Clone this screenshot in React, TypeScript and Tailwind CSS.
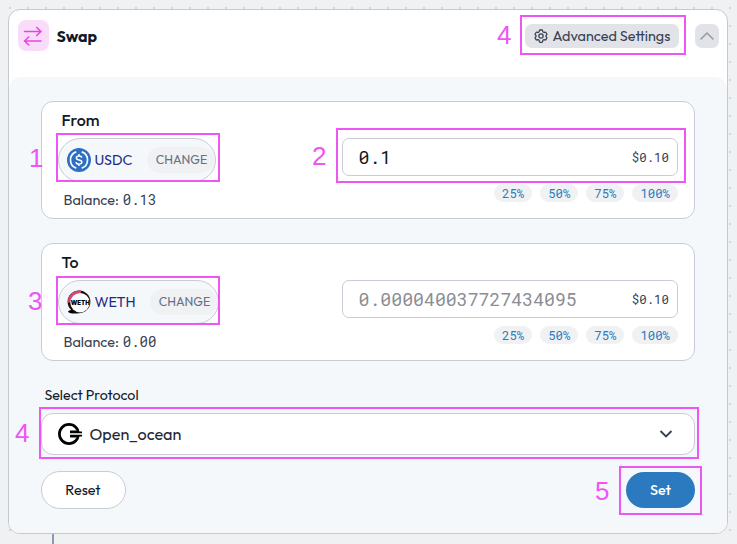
import React from "react";

const sans = "font-['Outfit','Lato',sans-serif]";
const mono = "font-['Roboto_Mono','Inter',monospace]";

function Amount({ value, className }: { value: string; className?: string }) {
  return <span className={`${mono} whitespace-nowrap ${className ?? ""}`}>{value}</span>;
}

function UsdcIcon() {
  return (
    <svg width="24" height="24" viewBox="0 0 32 32" className="shrink-0">
      <circle cx="16" cy="16" r="16" fill="#2e6fc4" />
      <path
        d="M12.4 5.2A11.4 11.4 0 0 0 12.4 26.8M19.6 5.2A11.4 11.4 0 0 1 19.6 26.8"
        fill="none"
        stroke="#fff"
        strokeWidth="2.2"
      />
      <path
        d="M19.6 12.9C19.4 11.3 18 10.6 16 10.6s-3.5 1-3.5 2.6c0 3.9 7.3 1.7 7.3 5.6 0 1.7-1.6 2.7-3.8 2.7s-3.7-.9-3.9-2.7M16 8v2.6M16 21.4V24"
        fill="none"
        stroke="#fff"
        strokeWidth="2"
      />
    </svg>
  );
}

function WethIcon() {
  return (
    <svg width="24" height="24" viewBox="0 0 24 24" className="shrink-0">
      <ellipse cx="7.5" cy="21.6" rx="6.5" ry="2" fill="#050505" />
      <circle cx="12" cy="11.8" r="11.4" fill="#111" />
      <path d="M2.4 12.5A9.8 9.8 0 0 1 14 2" fill="none" stroke="#d84673" strokeWidth="2.8" />
      <circle cx="13" cy="12.7" r="9.7" fill="#fff" />
      <text x="3.8" y="15" fontSize="6" fontWeight="900" textLength="19" lengthAdjust="spacingAndGlyphs" fontFamily="Inter, sans-serif">
        WETH
      </text>
    </svg>
  );
}

function OceanIcon() {
  return (
    <svg width="25" height="24" viewBox="0 0 25 24" className="shrink-0">
      <circle cx="11" cy="12" r="9.6" fill="none" stroke="#000" strokeWidth="2.7" />
      <path d="M18 7.9h6v8.2h-6z" fill="#fff" />
      <path d="M18.5 7h1.7l1.4 2.4h2.4v1.8H12V8.6h6.5zM12 12.8h12v1.8h-2.4L20.200 17h-1.700v-1.600H12z" fill="#000" />
    </svg>
  );
}

type PanelProps = {
  title: string;
  token: string;
  icon: React.ReactNode;
  pill: string;
  balance: string;
  amount: string;
  amountColor: string;
};

function TokenPanel({ title, token, icon, pill, balance, amount, amountColor }: PanelProps) {
  return (
    <section className="flex h-[118px] justify-between rounded-[12px] border border-[#c8ccd4] bg-white pr-4 pl-4">
      <div className="flex flex-col pt-2">
        <h2 className="h-5 pl-[3.5px] text-[16px] leading-5 font-medium text-[#111827]">{title}</h2>
        <div className={`mt-2 flex h-[44px] items-center rounded-full border border-[#c8ccd4] bg-[#f4f8fb] pl-2 ${pill}`}>
          {icon}
          <span className="ml-[3.4px] pt-px text-[14.3px] text-[#1e2d82]">{token}</span>
          <span className="mr-px ml-auto flex h-[26px] w-[67px] items-center justify-center rounded-full bg-[#f0f1f3] pl-[2px] text-[12.4px] text-[#667085]">
            CHANGE
          </span>
        </div>
        <p className="mt-[6px] pl-[5.5px] text-[14.4px] leading-6 text-[#374151]">
          Balance: <Amount value={balance} className="ml-px text-[14px]" />
        </p>
      </div>
      <div className="flex flex-col items-end pt-9">
        <div className="flex h-[38px] w-[336px] items-center justify-between rounded-[7px] border border-[#c8ccd4] pr-2 pl-[15.5px]">
          <Amount value={amount} className={`pt-px text-[18.2px] ${amountColor}`} />
          <Amount value="$0.10" className="text-[12.4px] text-[#374151]" />
        </div>
        <div className="mt-2 flex gap-2">
          {["25%", "50%", "75%", "100%"].map((p) => (
            <span
              key={p}
              className={`${mono} flex h-[18px] items-center rounded-full bg-[#f0f1f3] px-2 text-[12.3px] text-[#2b79be]`}
            >
              {p}
            </span>
          ))}
        </div>
      </div>
    </section>
  );
}

function Marker({ n, text, box }: { n: string; text: string; box: string }) {
  return (
    <>
      <span className={`absolute font-['Liberation_Sans',sans-serif] text-[26px] leading-[26px] text-[#ee55f5] ${text}`}>{n}</span>
      <div className={`absolute border-2 border-[#ee55f5] ${box}`} />
    </>
  );
}

export default function App() {
  return (
    <div
      className={`relative h-[544px] w-[737px] overflow-hidden bg-[#f0f1f3] bg-[radial-gradient(circle_at_1px_1px,#d4d6da_1.5px,transparent_1.5px)] bg-[length:18px_18px] bg-[position:9px_7px] pt-[9px] pl-2 ${sans}`}
    >
      <main className="flex h-[525px] w-[720px] flex-col overflow-hidden rounded-[12px] border border-[#c5c9d0] bg-white">
        <header className="flex h-[67px] shrink-0 items-start justify-between pt-[10px] pr-2 pl-[8.5px]">
          <div className="flex items-center gap-2">
            <div className="flex size-[31px] items-center justify-center rounded-[8px] bg-[#f9dcfa]">
              <svg width="20" height="20" viewBox="0 0 20 20" fill="none" stroke="#e645e6" strokeWidth="1.6" strokeLinecap="round" strokeLinejoin="round">
                <path d="M1.5 5.5H18M13.7 1.5 18 5.5l-4.3 4M18 15H1.5M5.8 11 1.5 15l4.3 4" />
              </svg>
            </div>
            <h1 className="text-[16px] font-bold text-[#111827]">Swap</h1>
          </div>
          <div className="flex gap-4 pt-1">
            <button className="flex h-6 w-[154px] items-center rounded-[7px] bg-[#e1e3e8] pl-2 text-[14.4px] text-[#374151]">
              <svg width="16" height="16" viewBox="0 0 24 24" fill="none" stroke="currentColor" strokeWidth="1.9" strokeLinejoin="round" className="mr-[3.5px] shrink-0">
                <path d="M9.6 3.9c.1-.5.6-.9 1.1-.9h2.6c.5 0 1 .4 1.1.9l.3 1.3c.1.4.3.7.6.9l1.2.7 1.5-.5c.5-.2 1.1 0 1.4.5l1.3 2.2c.3.5.2 1.1-.3 1.5l-1 .9v1.4l1 .9c.5.4.6 1 .3 1.5l-1.3 2.2c-.3.5-.9.7-1.4.5l-1.5-.5-1.2.7c-.3.2-.5.5-.6.9l-.3 1.5c-.1.5-.6.9-1.1.9h-2.6c-.5 0-1-.4-1.1-.9l-.3-1.5c-.1-.4-.3-.7-.6-.9l-1.2-.7-1.5.5c-.5.2-1.1 0-1.4-.5l-1.3-2.2c-.3-.5-.2-1.1.3-1.5l1-.9v-1.4l-1-.9c-.5-.4-.6-1-.3-1.5l1.3-2.2c.3-.5.9-.7 1.4-.5l1.5.5 1.2-.7c.3-.2.5-.5.6-.9z" />
                <circle cx="12" cy="12" r="3.2" />
              </svg>
              <span className="pt-px">Advanced Settings</span>
            </button>
            <button className="flex size-6 items-center justify-center rounded-[7px] bg-[#e1e3e8]">
              <svg width="16" height="16" viewBox="0 0 16 16" fill="none" stroke="#959ba7" strokeWidth="1.6" strokeLinecap="round" strokeLinejoin="round">
                <path d="m2 11 6-6 6 6" />
              </svg>
            </button>
          </div>
        </header>
        <div className="flex grow flex-col rounded-t-[12px] bg-[#f4f8fb] px-8 pt-6">
          <TokenPanel title="From" token="USDC" icon={<UsdcIcon />} pill="w-[158px]" balance="0.13" amount="0.1" amountColor="text-[#111827]" />
          <div className="h-6 shrink-0" />
          <TokenPanel title="To" token="WETH" icon={<WethIcon />} pill="w-[161px]" balance="0.00" amount="0.000040037727434095" amountColor="text-[#8b8e94]" />
          <label className="mt-6 pl-[3.5px] text-[14.2px] leading-5 text-[#111827]">Select Protocol</label>
          <div className="mt-2 flex h-[42px] shrink-0 items-center rounded-[12px] border border-[#c8ccd4] bg-white pr-5 pl-4 text-[16.2px] text-[#1f2937]">
            <OceanIcon />
            <span className="ml-[6.5px]">Open_ocean</span>
            <svg width="16" height="16" viewBox="0 0 16 16" fill="none" stroke="#374151" strokeWidth="1.9" className="ml-auto">
              <path d="m2.5 5 5.5 5.5L13.5 5" />
            </svg>
          </div>
          <div className="mt-4 flex items-center justify-between">
            <button className="h-[38px] w-[85px] rounded-full border border-[#c8ccd4] bg-white pt-px pr-px text-[14.4px] text-[#111827]">Reset</button>
            <button className="h-9 w-[69px] rounded-full bg-[#2b79be] pt-px text-[14.4px] font-medium text-white">Set</button>
          </div>
        </div>
      </main>
      <div className="ml-[44px] h-[10px] w-[2px] bg-[#8b9bb4]" />
      <Marker n="4" text="left-[497px] top-[22px]" box="left-[520px] top-[15px] w-[166px] h-[40px]" />
      <Marker n="1" text="left-[29px] top-[145px]" box="left-[56px] top-[133px] w-[164px] h-[49px]" />
      <Marker n="2" text="left-[312px] top-[143px]" box="left-[336px] top-[128px] w-[350px] h-[55px]" />
      <Marker n="3" text="left-[28px] top-[288px]" box="left-[56px] top-[276px] w-[164px] h-[49px]" />
      <Marker n="4" text="left-[15px] top-[420px]" box="left-[39px] top-[407px] w-[660px] h-[52px]" />
      <Marker n="5" text="left-[595px] top-[478px]" box="left-[619px] top-[466px] w-[83px] h-[49px]" />
    </div>
  );
}
